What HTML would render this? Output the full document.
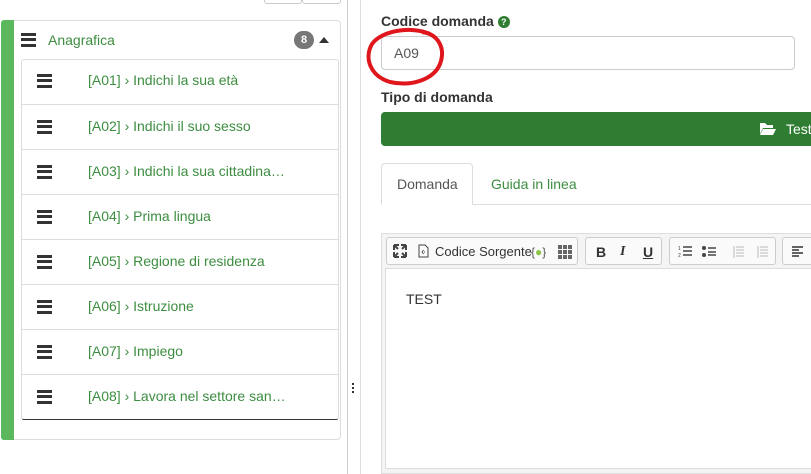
<!DOCTYPE html>
<html style="overflow:hidden;height:474px"><head><meta charset="utf-8"><style>
*{box-sizing:border-box;margin:0;padding:0}
body{width:811px;height:474px;overflow:hidden;background:#fff;font-family:"Liberation Sans",sans-serif;position:relative;font-size:14px}
.abs{position:absolute}
.ham{position:absolute;width:15px;height:14px;border-top:3px solid #333;border-bottom:3px solid #333}
.ham:after{content:"";position:absolute;left:0;right:0;top:2px;border-top:3px solid #333}
.row{position:absolute;left:21px;width:318px;height:45px;border-top:1px solid #ddd}
.row .t{position:absolute;left:67px;top:13px;color:#3c8d40;font-size:14px;white-space:nowrap}
.row .ham{left:16px;top:15px}
.tb{position:absolute;top:237px;height:28px;border:1px solid #ccc;border-radius:3px;background:#fafafa}
.tb span{position:absolute;top:6px;font-size:14px;color:#333}
</style></head><body>
<div class="abs" style="left:264px;top:-4px;width:38px;height:8px;border:1px solid #ccc;border-radius:3px"></div>
<div class="abs" style="left:302px;top:-4px;width:39px;height:8px;border:1px solid #ccc;border-radius:3px"></div>
<div class="abs" style="left:1px;top:20px;width:340px;height:420px;border:1px solid #ddd;border-radius:4px"></div>
<div class="abs" style="left:1px;top:20px;width:13px;height:420px;background:#5cb85c;border-radius:3px 0 0 3px"></div>
<div class="ham" style="left:21px;top:33px"></div>
<div class="abs" style="left:48px;top:32px;color:#3c8d40;font-size:14px">Anagrafica</div>
<div class="abs" style="left:294px;top:31px;width:20px;height:18px;border-radius:9px;background:#777;color:#fff;font-size:11px;font-weight:bold;text-align:center;line-height:18px">8</div>
<div class="abs" style="left:319px;top:37px;width:0;height:0;border-left:5px solid transparent;border-right:5px solid transparent;border-bottom:6px solid #333"></div>
<div class="abs" style="left:21px;top:59px;width:318px;height:361px;border:1px solid #ddd;border-bottom:1px solid #333;border-radius:3px"></div>
<div class="row" style="top:59px;border-top:none"><div class="ham"></div><div class="t">[A01] › Indichi la sua età</div></div>
<div class="row" style="top:104px"><div class="ham"></div><div class="t">[A02] › Indichi il suo sesso</div></div>
<div class="row" style="top:149px"><div class="ham"></div><div class="t">[A03] › Indichi la sua cittadina…</div></div>
<div class="row" style="top:194px"><div class="ham"></div><div class="t">[A04] › Prima lingua</div></div>
<div class="row" style="top:239px"><div class="ham"></div><div class="t">[A05] › Regione di residenza</div></div>
<div class="row" style="top:284px"><div class="ham"></div><div class="t">[A06] › Istruzione</div></div>
<div class="row" style="top:329px"><div class="ham"></div><div class="t">[A07] › Impiego</div></div>
<div class="row" style="top:374px"><div class="ham"></div><div class="t">[A08] › Lavora nel settore san…</div></div>
<div class="abs" style="left:347px;top:0;width:1px;height:474px;background:#ccc"></div>
<div class="abs" style="left:360px;top:0;width:1px;height:474px;background:#ddd"></div>
<div class="abs" style="left:352px;top:383px;width:2px;height:2px;background:#333"></div>
<div class="abs" style="left:352px;top:387px;width:2px;height:2px;background:#333"></div>
<div class="abs" style="left:352px;top:391px;width:2px;height:2px;background:#333"></div>
<div class="abs" style="left:381px;top:13px;font-weight:bold;color:#333;font-size:14px">Codice domanda <span style="display:inline-block;width:12px;height:12px;border-radius:6px;background:#2e7d32;color:#fff;font-size:9px;text-align:center;line-height:12px;vertical-align:1px">?</span></div>
<div class="abs" style="left:381px;top:36px;width:414px;height:34px;border:1px solid #ccc;border-radius:4px"></div>
<div class="abs" style="left:394px;top:45px;color:#555;font-size:14px">A09</div>
<svg class="abs" style="left:362px;top:24px" width="90" height="66"><path d="M68,10 C50,2 20,6 10,20 C2,34 8,52 28,58 C50,63 72,55 78,40 C84,24 76,10 60,8" fill="none" stroke="#e0161d" stroke-width="4"/></svg>
<div class="abs" style="left:381px;top:89px;font-weight:bold;color:#333;font-size:14px">Tipo di domanda</div>
<div class="abs" style="left:381px;top:112px;width:440px;height:34px;background:#2e7d32;border-radius:4px"></div>
<svg class="abs" style="left:760px;top:122px" width="16" height="13"><path d="M0,1h5l2,2h6v3H3L0,12z M3,7h13l-3,6H0z" fill="#fff"/></svg>
<div class="abs" style="left:786px;top:121px;color:#fff;font-size:14px">Test</div>
<div class="abs" style="left:381px;top:204px;width:430px;height:1px;background:#ddd"></div>
<div class="abs" style="left:381px;top:163px;width:92px;height:42px;border:1px solid #ddd;border-bottom:1px solid #fff;border-radius:4px 4px 0 0;background:#fff"></div>
<div class="abs" style="left:397px;top:176px;color:#555;font-size:14px">Domanda</div>
<div class="abs" style="left:491px;top:176px;color:#3c8d40;font-size:14px">Guida in linea</div>
<div class="abs" style="left:381px;top:233px;width:440px;height:241px;border:1px solid #ddd;background:#f4f4f4"></div>
<div class="abs" style="left:385px;top:268px;width:430px;height:201px;border:1px solid #ddd;background:#fff"></div>
<div class="tb" style="left:386px;width:192px">
<svg style="position:absolute;left:6px;top:6px" width="14" height="14"><path d="M1,1h5M1,1v5M1,1l4,4M13,1h-5M13,1v5M13,1l-4,4M1,13h5M1,13v-5M1,13l4,-4M13,13h-5M13,13v-5M13,13l-4,-4" stroke="#444" stroke-width="2" fill="none"/></svg>
<svg style="position:absolute;left:31px;top:6px" width="11" height="14"><path d="M1,1h6l3,3v9H1z" fill="none" stroke="#444"/><path d="M4,8l1.5-2M4,8l1.5,2M7,8l-1,0" stroke="#444"/></svg>
<span style="left:48px;font-size:13px;top:6px">Codice Sorgente</span>
<span style="left:144px;color:#555;font-size:12px;top:7px">{<b style="color:#8bc34a">●</b>}</span>
<svg style="position:absolute;left:171px;top:7px" width="14" height="14"><g fill="#666"><rect x="0" y="0" width="4" height="4"/><rect x="5" y="0" width="4" height="4"/><rect x="10" y="0" width="4" height="4"/><rect x="0" y="5" width="4" height="4"/><rect x="5" y="5" width="4" height="4"/><rect x="10" y="5" width="4" height="4"/><rect x="0" y="10" width="4" height="4"/><rect x="5" y="10" width="4" height="4"/><rect x="10" y="10" width="4" height="4"/></g></svg>
</div>
<div class="tb" style="left:585px;width:77px"><span style="left:10px;font-weight:bold">B</span><span style="left:34px;font-style:italic;font-family:'Liberation Serif',serif;font-weight:bold">I</span><span style="left:57px;text-decoration:underline;font-weight:bold">U</span></div>
<div class="tb" style="left:669px;width:107px">
<svg style="position:absolute;left:8px;top:7px" width="14" height="13"><path d="M5,2h9M5,6h9M5,10h9" stroke="#444" stroke-width="1.5"/><text x="0" y="5" font-size="5" fill="#444">1</text><text x="0" y="12" font-size="5" fill="#444">2</text></svg>
<svg style="position:absolute;left:32px;top:7px" width="14" height="13"><circle cx="2" cy="3" r="2" fill="#444"/><circle cx="2" cy="10" r="2" fill="#444"/><path d="M6,3h8M6,7h8M6,10h8" stroke="#444" stroke-width="1.5"/></svg>
<svg style="position:absolute;left:60px;top:7px" width="14" height="13"><path d="M6,2h8M6,5h8M6,8h8M6,11h8M4,1v12" stroke="#bbb"/></svg>
<svg style="position:absolute;left:84px;top:7px" width="14" height="13"><path d="M6,2h8M6,5h8M6,8h8M6,11h8M4,1v12" stroke="#bbb"/></svg>
</div>
<div class="tb" style="left:782px;width:40px"><svg style="position:absolute;left:9px;top:8px" width="12" height="11"><path d="M0,1h11M0,4h7M0,7h11M0,10h7" stroke="#333" stroke-width="1.6"/></svg></div>
<div class="abs" style="left:406px;top:291px;color:#333;font-size:14px">TEST</div>
</body></html>
